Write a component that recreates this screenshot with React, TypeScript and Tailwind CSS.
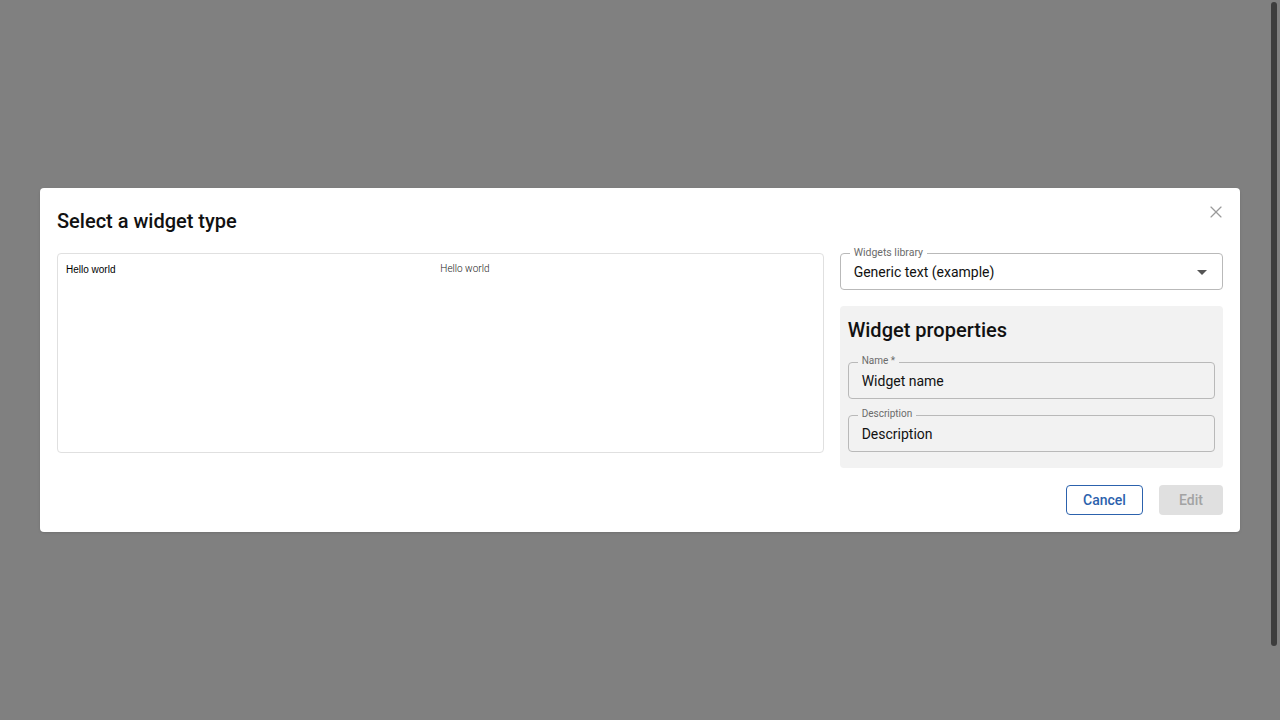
import { X } from "lucide-react";

function OutlinedField({
  label,
  value,
  bg,
  labelClass,
  children,
}: {
  label: string;
  value: string;
  bg: string;
  labelClass: string;
  children?: React.ReactNode;
}) {
  return (
    <div className={`relative h-[37px] rounded border border-[#b9b9b9] ${bg}`}>
      <span
        className={`absolute left-[9px] px-[4px] leading-[14px] text-[#6b6b6b] ${labelClass} ${bg}`}
      >
        {label}
      </span>
      <div className="flex h-full items-center justify-between pl-[13px] pr-[8px] pt-[2px] text-[14px] text-[#111]">
        <span>{value}</span>
        {children}
      </div>
    </div>
  );
}

export default function App() {
  return (
    <div
      className="relative flex h-[720px] w-full items-center justify-center bg-[#808080] px-10"
      style={{ fontFamily: "Roboto, 'Noto Sans', sans-serif" }}
    >
      {/* Scrollbar thumb */}
      <div className="absolute right-[3px] top-[2px] h-[644px] w-[6px] rounded-full bg-[#3d3d3d]" />

      {/* Dialog */}
      <div className="relative w-full rounded bg-white px-[17px] pb-[17px] pt-[17px] shadow-sm">
        <button className="absolute right-[14px] top-[14px] text-[#9a9a9a]">
          <X size={20} strokeWidth={1.4} />
        </button>

        <h2 className="text-[20px] font-medium leading-[32px] text-[#111]">
          Select a widget type
        </h2>

        <div className="mt-[16px] grid grid-cols-[2fr_1fr] items-start gap-4">
          {/* Preview */}
          <div className="grid h-[200px] grid-cols-2 content-start rounded border border-[#e0e0e0]">
            <div
              className="pl-2 pt-[9px] text-[10px] leading-[13px] text-black"
              style={{ fontFamily: "'Liberation Sans', Arial, sans-serif" }}
            >
              Hello world
            </div>
            <div className="pt-[8px] text-[10px] font-light leading-[13px] text-[#222]">
              Hello world
            </div>
          </div>

          {/* Right column */}
          <div className="flex flex-col gap-4">
            <OutlinedField
              label="Widgets library"
              value="Generic text (example)"
              bg="bg-white"
              labelClass="top-[-8px] text-[10.5px]"
            >
              <svg width="24" height="24" viewBox="0 0 24 24" className="-mt-[2px] fill-[#555]">
                <path d="M7 10l5 5 5-5z" />
              </svg>
            </OutlinedField>

            <div className="rounded bg-[#f2f2f2] px-2 pb-4 pt-[8px]">
              <h3 className="text-[20px] font-medium leading-[32px] text-[#111]">
                Widget properties
              </h3>
              <div className="mt-4 flex flex-col gap-4">
                <OutlinedField
                  label="Name *"
                  value="Widget name"
                  bg="bg-[#f2f2f2]"
                  labelClass="top-[-9px] text-[10px]"
                />
                <OutlinedField
                  label="Description"
                  value="Description"
                  bg="bg-[#f2f2f2]"
                  labelClass="top-[-9px] text-[10px]"
                />
              </div>
            </div>
          </div>
        </div>

        <div className="mt-[17px] flex justify-end gap-4">
          <button className="h-[30px] w-[77px] rounded border border-[#2c62ad] text-[14px] font-medium text-[#2c62ad]">
            Cancel
          </button>
          <button className="h-[30px] w-[64px] rounded bg-[#e0e0e0] text-[14px] font-medium text-[#a3a3a3]">
            Edit
          </button>
        </div>
      </div>
    </div>
  );
}
